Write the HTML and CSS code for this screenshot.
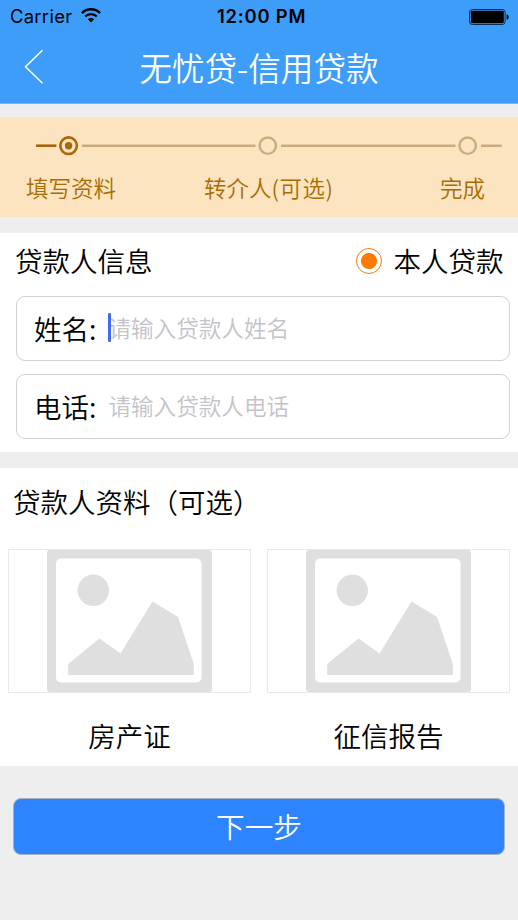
FILE: index.html
```html
<!DOCTYPE html>
<html lang="zh-CN">
<head>
<meta charset="utf-8">
<title>无忧贷-信用贷款</title>
<link rel="stylesheet" href="styles.css">
</head>
<body>
<header class="header">
  <div class="status">
    <div class="status-left">
      <span class="carrier">Carrier</span>
      <svg class="wifi" width="20" height="15" viewBox="0 0 20 15" fill="none" stroke="#000" stroke-width="2.4">
        <path d="M0.9 5.1C6 0 14 0 19.1 5.1"/>
        <path d="M4.2 8.5C7.4 5.3 12.6 5.3 15.8 8.5"/>
        <path d="M10 14.4L6.8 11.2C8.6 9.6 11.4 9.6 13.2 11.2Z" fill="#000" stroke="none"/>
      </svg>
    </div>
    <span class="clock">12:00 PM</span>
    <div class="status-right">
      <svg width="40" height="16" viewBox="0 0 40 16">
        <rect x=".5" y=".5" width="35.6" height="15" rx="2.8" fill="none" stroke="#0b2c4c"/>
        <rect x="1.8" y="1.8" width="33" height="12.4" rx="1.4"/>
        <path d="M37.6 5.2C40.4 5.8 40.4 10.2 37.6 10.8Z"/>
      </svg>
    </div>
  </div>
  <nav class="nav">
    <svg class="back" width="20" height="36" viewBox="0 0 20 36" fill="none" stroke="#fff" stroke-width="1.5"><path d="M18.5 1.2L1.5 17.7L18.5 34.2"/></svg>
    <h1 class="title">无忧贷-信用贷款</h1>
    <span></span>
  </nav>
</header>

<section class="steps">
  <svg class="track" width="518" height="22" viewBox="0 0 518 22" fill="none">
    <g stroke="#a86808" stroke-width="2.6">
      <path d="M36 10.7H56.4"/>
      <circle cx="68.6" cy="10.7" r="8.3"/>
      <circle cx="68.6" cy="10.7" r="3.7" fill="#a86808" stroke="none"/>
    </g>
    <g stroke="#cbac7f" stroke-width="2.4">
      <path d="M82 10.7H255.5M281 10.7H455.5M481 10.7H501.7"/>
      <circle cx="267.8" cy="10.7" r="8.2"/>
      <circle cx="467.7" cy="10.7" r="8.2"/>
    </g>
  </svg>
  <div class="labels">
    <span>填写资料</span>
    <span>转介人<span class="optional">(可选)</span></span>
    <span>完成</span>
  </div>
</section>

<section class="card info">
  <div class="card-head">
    <h2>贷款人信息</h2>
    <div class="radio">
      <i class="radio-dot"></i>
      <span>本人贷款</span>
    </div>
  </div>
  <div class="field">
    <span class="field-label">姓名:</span>
    <i class="caret"></i>
    <span class="placeholder">请输入贷款人姓名</span>
  </div>
  <div class="field">
    <span class="field-label">电话:</span>
    <i class="caret hidden"></i>
    <span class="placeholder">请输入贷款人电话</span>
  </div>
</section>

<section class="card docs">
  <h2>贷款人资料（可选）</h2>
  <div class="uploads">
    <div class="upload">
      <div class="frame">
        <svg width="165" height="142" viewBox="0 0 165 142" fill="#dfdfdf">
          <rect width="165" height="142" rx="3"/>
          <rect x="9" y="8.5" width="145.5" height="124" rx="5" fill="#fff"/>
          <circle cx="46.3" cy="40.3" r="15.7"/>
          <path d="M21.2 125V114L52.5 88.5L73.5 103.5L105.5 51.5L131 67L146.8 114V125Z"/>
        </svg>
      </div>
      <span>房产证</span>
    </div>
    <div class="upload">
      <div class="frame">
        <svg width="165" height="142" viewBox="0 0 165 142" fill="#dfdfdf">
          <rect width="165" height="142" rx="3"/>
          <rect x="9" y="8.5" width="145.5" height="124" rx="5" fill="#fff"/>
          <circle cx="46.3" cy="40.3" r="15.7"/>
          <path d="M21.2 125V114L52.5 88.5L73.5 103.5L105.5 51.5L131 67L146.8 114V125Z"/>
        </svg>
      </div>
      <span>征信报告</span>
    </div>
  </div>
</section>

<button class="next" type="button">下一步</button>
</body>
</html>
```
FILE: styles.css
```css
* { box-sizing: border-box; }

body {
  margin: 0;
  height: 920px;
  overflow: hidden;
  background: #eee;
  color: #000;
  font-family: "Noto Sans CJK SC", sans-serif;
  font-weight: 350;
  font-size: 27.5px;
}

h1, h2 { margin: 0; font-weight: inherit; font-size: inherit; }
svg { display: block; flex: none; }

.header {
  height: 104px;
  background: #3e9df9;
  border-bottom: 1px solid #a5abb0;
}

.status {
  display: grid;
  grid-template-columns: 207px auto 1fr;
  align-items: center;
  height: 33px;
  padding: 0 9px 0 10px;
  font-family: Inter, sans-serif;
  font-size: 18.4px;
  line-height: 33px;
}
.status-left { display: flex; align-items: center; gap: 9px; }
.carrier { font-weight: 400; letter-spacing: 0.3px; }
.wifi { margin-top: -2px; }
.clock { font-weight: 600; letter-spacing: 0.8px; }
.status-right { display: flex; justify-content: flex-end; }

.nav {
  display: grid;
  grid-template-columns: 1fr auto 1fr;
  align-items: center;
  height: 67px;
  padding: 0 24px;
}
.title { color: #fff; font-size: 32.6px; line-height: 66px; }

.steps {
  height: 100px;
  margin-top: 13px;
  padding-top: 18px;
  background: #fde4c1;
  color: #a86c00;
}
.labels {
  display: grid;
  grid-template-columns: 178px 1fr auto;
  padding: 14px 33px 0 26px;
  font-size: 22.5px;
  line-height: 32px;
}
.optional { letter-spacing: 0.5px; }

.card { background: #fff; }
.info { height: 219px; margin-top: 16px; padding: 0 8px 0 15px; }
.card-head {
  display: flex;
  justify-content: space-between;
  padding-right: 6.5px;
  height: 63px;
  line-height: 54px;
}
.radio { display: flex; gap: 11.5px; }
.radio-dot {
  width: 26px;
  height: 26px;
  margin-top: 15px;
  border: 1.5px solid #f87c0a;
  border-radius: 50%;
  background: radial-gradient(circle, #ff7b00 7.6px, #fff 8.4px);
}
.field {
  display: flex;
  align-items: center;
  height: 65px;
  margin: 0 0 13px 1px;
  padding: 0 0 1px 17px;
  border: 1px solid #d0d1d4;
  border-radius: 9px;
}
.field-label { width: 74.4px; line-height: 61px; }
.caret {
  z-index: 1;
  width: 3px;
  height: 29px;
  margin: -1px -3px 0 0;
  background: #416bf8;
  border-radius: 1px;
}
.hidden { visibility: hidden; }
.placeholder { margin-top: -1px; color: #c3c3c9; font-size: 22.6px; line-height: 61px; }

.docs { height: 298px; margin-top: 16px; padding: 0 8px; }
.docs h2 { height: 81px; padding-left: 5px; line-height: 66px; }
.uploads { display: grid; grid-template-columns: 1fr 1fr; gap: 16px; }
.upload { display: flex; flex-direction: column; align-items: center; }
.frame {
  display: flex;
  justify-content: center;
  width: 100%;
  height: 144px;
  border: 1px solid #e9e9e9;
}
.upload span { line-height: 40px; margin-top: 22px; }

.next {
  display: block;
  width: 492px;
  height: 57px;
  margin: 32px 0 0 13px;
  padding: 0 0 2px;
  border: 1px solid #a9b3bf;
  border-radius: 8px;
  background: #2e84ff;
  color: #fff;
  font: inherit;
  font-size: 28.7px;
  line-height: 53px;
}
```
